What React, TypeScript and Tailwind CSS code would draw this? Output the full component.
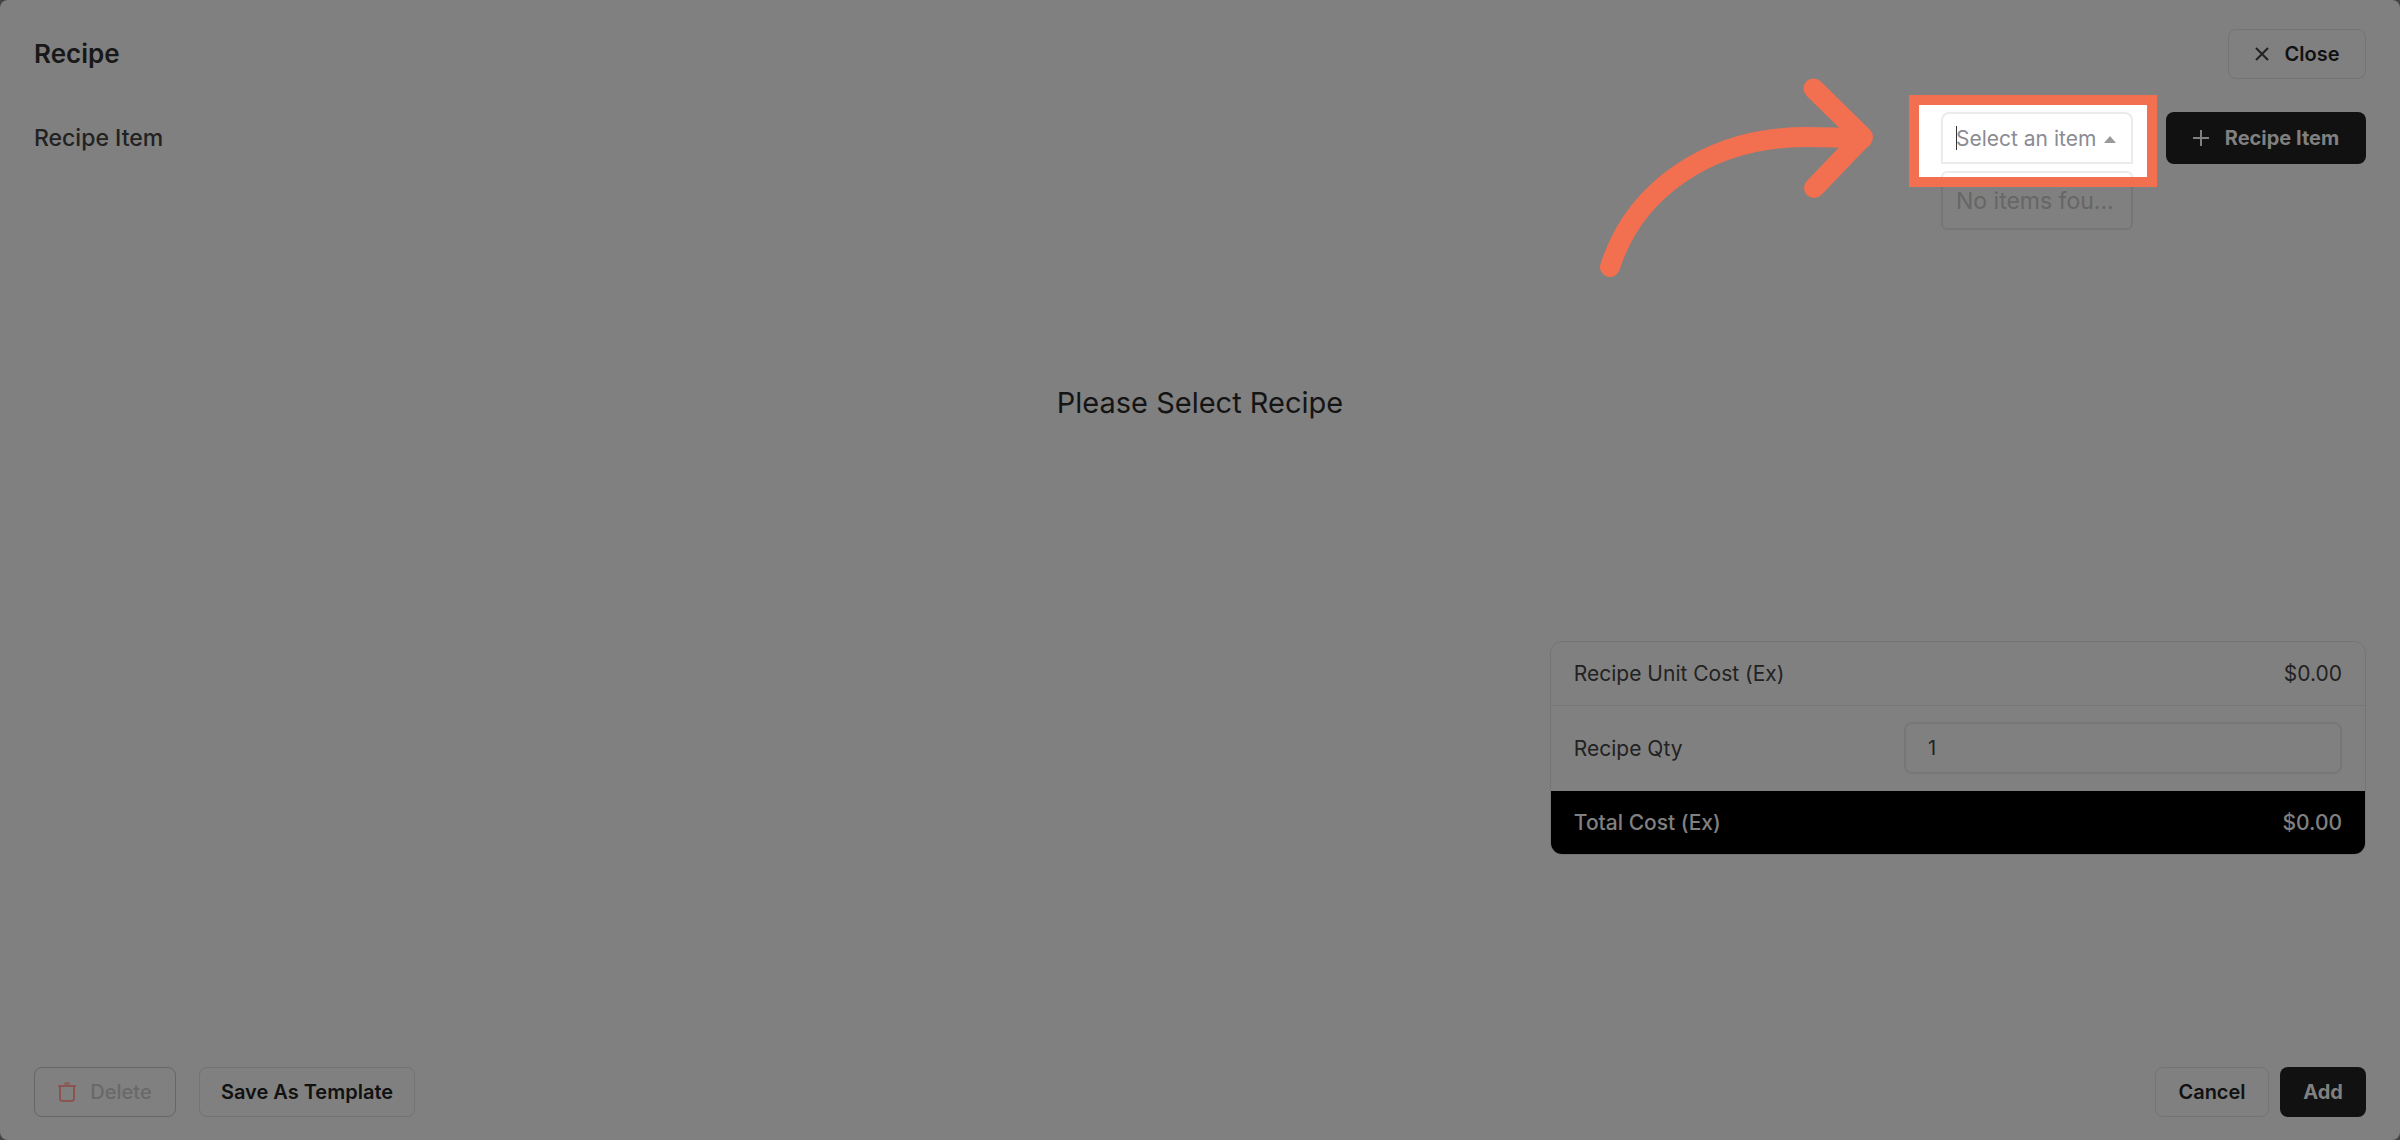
import React, { useState } from "react";

const outlineButton =
  "flex h-[50px] cursor-pointer items-center justify-center rounded-lg border border-[#747474] text-xl font-semibold text-[#111111]";
const solidButton =
  "flex cursor-pointer items-center justify-center rounded-lg bg-[#111111] text-xl font-bold text-[#808080]";

function CloseIcon() {
  return (
    <svg aria-hidden="true" width="14" height="14" viewBox="0 0 14 14" fill="none" stroke="#222222" strokeWidth="2">
      <path d="M1 1l12 12M13 1L1 13" />
    </svg>
  );
}

function PlusIcon() {
  return (
    <svg aria-hidden="true" width="16" height="16" viewBox="0 0 16 16" fill="none" stroke="#808080" strokeWidth="2">
      <path d="M8 0v16M0 8h16" />
    </svg>
  );
}

function TrashIcon() {
  return (
    <svg aria-hidden="true" width="18" height="20" viewBox="0 0 18 20" fill="none" stroke="#8c5450" strokeWidth="2">
      <path d="M0 4h18M6.500 1.500h5M2 4v12.500a2.500 2.500 0 0 0 2.500 2.500h9a2.500 2.500 0 0 0 2.500-2.500V4" />
    </svg>
  );
}

function PointerArrow() {
  return (
    <svg
      aria-hidden="true"
      className="pointer-events-none absolute -top-[34px] -left-[341px]"
      width="274"
      height="200"
      viewBox="0 0 274 200"
      fill="none"
      stroke="#f26f50"
      strokeWidth="20"
      strokeLinecap="round"
      strokeLinejoin="round"
    >
      <path d="M10 189C35 111 110 59 206 59c20 0 36 .5 56 2" />
      <path d="M213.500 10.500L263 59L214 110" />
    </svg>
  );
}

function ItemSelect() {
  return (
    <div className="relative w-48">
      <div className="absolute -top-[17px] -right-6 -bottom-[23px] -left-8 bg-white" />
      <input
        type="text"
        role="combobox"
        aria-label="Select an item"
        aria-expanded="true"
        aria-controls="item-options"
        placeholder="Select an item"
        className="relative block h-[52px] w-full rounded-t-lg border-2 border-[#ebebeb] bg-white pr-8 pl-[13px] text-[21px] text-[#333333] outline-none placeholder:text-[#8b8b93] placeholder:opacity-100"
      />
      <span aria-hidden="true" className="absolute top-[14px] left-[15px] h-6 w-px bg-[#333333]" />
      <svg aria-hidden="true" className="absolute top-6 right-[17px]" width="12" height="7" viewBox="0 0 12 7" fill="#999999">
        <path d="M6 0l6 7H0z" />
      </svg>
      <ul
        id="item-options"
        role="listbox"
        className="absolute top-[59px] left-0 h-[59px] w-full rounded-md border-2 border-black/8 pt-3 pl-[13px] text-[23px] leading-8 text-[#666666]"
      >
        <li role="option" aria-selected="false">No items fou...</li>
      </ul>
      <div className="pointer-events-none absolute -top-[17px] -right-6 -bottom-[23px] -left-8 border-10 border-[#f26f50]" />
      <PointerArrow />
    </div>
  );
}

function CostTable() {
  const [qty, setQty] = useState("1");
  return (
    <div className="w-[35%] self-end overflow-hidden rounded-xl border border-[#747474]">
      <table className="w-full border-collapse text-[21px] text-[#222222]">
        <tbody>
          <tr className="h-[63px] border-b border-[#777777]">
            <th scope="row" className="pl-[23px] text-left font-normal">Recipe Unit Cost (Ex)</th>
            <td className="w-[461px] pr-[23px] text-right">$0.00</td>
          </tr>
          <tr className="h-[86px]">
            <th scope="row" className="pl-[23px] text-left font-normal">
              <label htmlFor="recipe-qty">Recipe Qty</label>
            </th>
            <td className="pr-[23px]">
              <input
                id="recipe-qty"
                type="text"
                inputMode="numeric"
                value={qty}
                onChange={(e) => setQty(e.target.value)}
                className="block h-[52px] w-full rounded-lg border-2 border-[#777777] bg-transparent px-[22px] text-xl outline-none"
              />
            </td>
          </tr>
          <tr className="h-[63px] bg-black text-[#808080]">
            <th scope="row" className="pl-[23px] text-left font-medium">Total Cost (Ex)</th>
            <td className="pr-[23px] text-right font-medium">$0.00</td>
          </tr>
        </tbody>
      </table>
    </div>
  );
}

export default function App() {
  return (
    <div className="bg-[#444444] font-['Inter',sans-serif]">
      <div className="flex min-h-screen flex-col rounded-lg bg-[#808080] px-[34px] pt-[29px] pb-[23px]">
        <header className="flex items-center justify-between">
          <h1 className="text-[26px] leading-9 font-semibold text-[#181818]">Recipe</h1>
          <button type="button" className={`${outlineButton} w-[138px] gap-4`}>
            <CloseIcon />
            Close
          </button>
        </header>

        <div className="mt-[33px] flex items-center">
          <h2 className="mr-auto text-[23px] font-medium text-[#222222]">Recipe Item</h2>
          <ItemSelect />
          <button type="button" className={`${solidButton} ml-[33px] h-[52px] w-[200px] gap-4`}>
            <PlusIcon />
            Recipe Item
          </button>
        </div>

        <main className="flex grow flex-col">
          <p className="py-[220px] text-center text-[29px] leading-[37px] text-[#141414]">
            Please Select Recipe
          </p>
          <CostTable />
        </main>

        <footer className="flex">
          <button
            type="button"
            disabled
            className="flex h-[50px] w-[142px] items-center justify-center gap-[14px] rounded-lg border border-[#666666] text-xl font-medium text-[#696969]"
          >
            <TrashIcon />
            Delete
          </button>
          <button type="button" className={`${outlineButton} ml-[23px] w-[216px]`}>Save As Template</button>
          <button type="button" className={`${outlineButton} ml-auto w-[114px]`}>Cancel</button>
          <button type="button" className={`${solidButton} ml-[11px] h-[50px] w-[86px]`}>Add</button>
        </footer>
      </div>
    </div>
  );
}
